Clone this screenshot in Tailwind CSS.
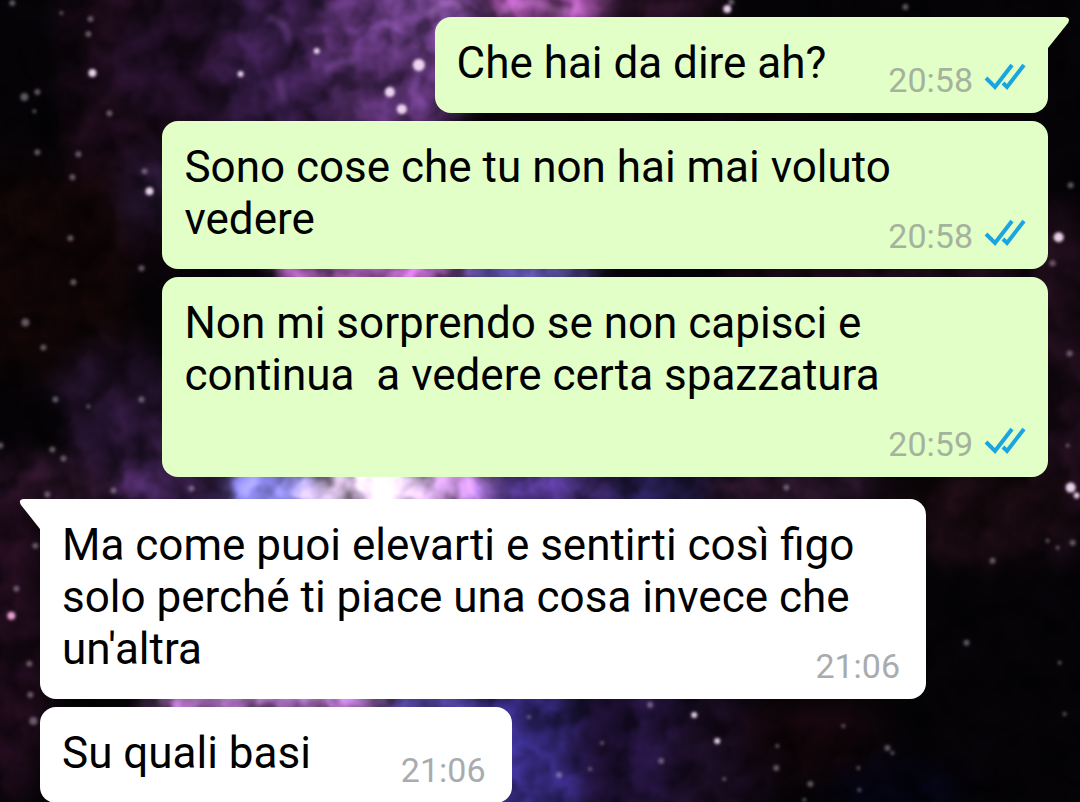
<!DOCTYPE html>
<html lang="it">
<head>
<meta charset="utf-8">
<meta name="viewport" content="width=device-width, initial-scale=1">
<title>Chat</title>
<script src="https://cdn.jsdelivr.net/npm/@tailwindcss/browser@4"></script>
</head>
<body class="relative min-h-screen overflow-x-hidden bg-[#060306] font-[Roboto,sans-serif] text-black">

<!-- Nebula wallpaper -->
<svg class="absolute inset-0 h-full w-full" viewBox="0 0 1080 802" preserveAspectRatio="xMidYMid slice" aria-hidden="true">
  <defs>
    <filter id="cloud" filterUnits="userSpaceOnUse" x="-80" y="-80" width="1240" height="962" color-interpolation-filters="sRGB">
      <feGaussianBlur in="SourceGraphic" stdDeviation="14" result="soft"/>
      <feTurbulence type="fractalNoise" baseFrequency="0.03" numOctaves="4" seed="8" result="noise"/>
      <feColorMatrix in="noise" values="2 0 0 0 -0.5  2 0 0 0 -0.5  2 0 0 0 -0.5  0 0 0 0 1" result="grey"/>
      <feComposite in="soft" in2="grey" operator="arithmetic" k1="0.85" k2="0.5" result="lit"/>
      <feColorMatrix in="lit" values="1 0 0 0 0  0 1 0 0 0  0 0 1 0 0  0 0 0 0 1" result="solid"/>
      <feDisplacementMap in="solid" in2="noise" scale="18" xChannelSelector="R" yChannelSelector="G"/>
      <feGaussianBlur stdDeviation="1.5"/>
    </filter>
    <filter id="wisp" x="-20%" y="-20%" width="140%" height="140%"><feGaussianBlur stdDeviation="3"/></filter>
    <filter id="star" filterUnits="userSpaceOnUse" x="0" y="0" width="1080" height="802"><feGaussianBlur stdDeviation="1.4"/></filter>
  </defs>
  <g filter="url(#cloud)">
    <rect x="-80" y="-80" width="1240" height="962" fill="#050306"/>
    <rect x="70" y="-40" width="120" height="300" fill="#1b0a18"/>
    <rect x="-40" y="170" width="170" height="200" fill="#100506"/>
    <ellipse cx="200" cy="60" rx="90" ry="70" fill="#200e25"/>
    <ellipse cx="280" cy="60" rx="60" ry="100" fill="#341b45"/>
    <ellipse cx="400" cy="40" rx="85" ry="100" fill="#5b3272"/>
    <ellipse cx="430" cy="10" rx="50" ry="45" fill="#7d4a9c"/>
    <ellipse cx="545" cy="0" rx="65" ry="35" fill="#a050a4"/>
    <ellipse cx="670" cy="5" rx="60" ry="25" fill="#251022"/>
    <ellipse cx="150" cy="190" rx="25" ry="40" fill="#2a1838"/>
    <ellipse cx="380" cy="272" rx="110" ry="28" fill="#b567c2"/>
    <ellipse cx="525" cy="272" rx="70" ry="24" fill="#6155b0"/>
    <ellipse cx="900" cy="272" rx="180" ry="20" fill="#1d0c18"/>
    <ellipse cx="120" cy="400" rx="60" ry="60" fill="#1d0f24"/>
    <ellipse cx="140" cy="450" rx="55" ry="50" fill="#2a1636"/>
    <ellipse cx="170" cy="486" rx="70" ry="24" fill="#45265c"/>
    <ellipse cx="40" cy="485" rx="80" ry="26" fill="#2c142a"/>
    <ellipse cx="290" cy="490" rx="64" ry="38" fill="#8a88ea"/>
    <ellipse cx="390" cy="490" rx="90" ry="40" fill="#f4d8ff"/>
    <ellipse cx="465" cy="490" rx="38" ry="32" fill="#d49aec"/>
    <ellipse cx="560" cy="490" rx="80" ry="30" fill="#50358a"/>
    <ellipse cx="660" cy="486" rx="60" ry="25" fill="#2b215a"/>
    <ellipse cx="790" cy="486" rx="90" ry="25" fill="#2c162c"/>
    <ellipse cx="1060" cy="380" rx="50" ry="180" fill="#1a0b16"/>
    <ellipse cx="980" cy="510" rx="90" ry="50" fill="#180a10"/>
    <ellipse cx="15" cy="640" rx="35" ry="160" fill="#1f0b1b"/>
    <ellipse cx="280" cy="703" rx="130" ry="28" fill="#ba7ad0"/>
    <ellipse cx="440" cy="703" rx="60" ry="22" fill="#5447a5"/>
    <ellipse cx="525" cy="760" rx="68" ry="85" fill="#34297c"/>
    <ellipse cx="640" cy="750" rx="70" ry="75" fill="#21123a"/>
    <ellipse cx="720" cy="760" rx="50" ry="70" fill="#180c20"/>
    <ellipse cx="810" cy="735" rx="70" ry="40" fill="#11050a"/>
    <ellipse cx="900" cy="790" rx="70" ry="26" fill="#040414"/>
  </g>
  <g filter="url(#wisp)" fill="none" stroke="#a86bd0" stroke-width="4" stroke-linecap="round" opacity=".55">
    <path d="M268 18Q290 20 288 42M326 72Q334 60 358 60M372 40Q380 12 400 28M418 60Q420 80 412 92L424 108M412 20L430 12M280 80L284 100"/>
    <path d="M432 14Q444 -4 460 6M500 12Q530 -4 548 8Q566 16 580 6" stroke="#e29af0"/>
  </g>
  <g filter="url(#star)" fill="#d8c8dc">
    <g opacity=".9" fill="#ffe6ff">
      <circle cx="93" cy="73" r="4"/><circle cx="317" cy="51" r="3"/><circle cx="419" cy="65" r="6"/><circle cx="390" cy="92" r="5"/><circle cx="402" cy="109" r="5"/><circle cx="241" cy="74" r="3"/><circle cx="150" cy="191" r="4"/><circle cx="727" cy="9" r="4"/><circle cx="1058" cy="237" r="5"/><circle cx="1070" cy="487" r="5"/><circle cx="1076" cy="495" r="3"/><circle cx="12" cy="615" r="4" fill="#ffb0e8"/><circle cx="717" cy="740" r="3"/><circle cx="694" cy="714" r="3"/>
    </g>
    <g opacity=".42">
      <circle cx="25" cy="97" r="4"/><circle cx="38" cy="92" r="3"/><circle cx="35" cy="111" r="2"/><circle cx="13" cy="3" r="3"/><circle cx="62" cy="13" r="2"/><circle cx="91" cy="19" r="3"/><circle cx="89" cy="34" r="3"/><circle cx="110" cy="113" r="3"/><circle cx="38" cy="152" r="3"/><circle cx="79" cy="154" r="3"/><circle cx="73" cy="177" r="3"/><circle cx="71" cy="238" r="3"/><circle cx="145" cy="171" r="3"/><circle cx="142" cy="268" r="3"/><circle cx="74" cy="282" r="3"/><circle cx="26" cy="322" r="4"/><circle cx="44" cy="347" r="3"/><circle cx="56" cy="399" r="3"/><circle cx="142" cy="399" r="3"/><circle cx="89" cy="406" r="2"/><circle cx="53" cy="449" r="3"/><circle cx="64" cy="458" r="3"/><circle cx="1" cy="445" r="3"/><circle cx="114" cy="490" r="3"/><circle cx="192" cy="488" r="3"/><circle cx="48" cy="494" r="3"/><circle cx="36" cy="545" r="3"/><circle cx="17" cy="588" r="3"/><circle cx="30" cy="663" r="3"/><circle cx="31" cy="694" r="3"/><circle cx="34" cy="720" r="4"/><circle cx="731" cy="2" r="3"/><circle cx="905" cy="7" r="3"/><circle cx="786" cy="487" r="3"/><circle cx="992" cy="560" r="3"/><circle cx="966" cy="642" r="3"/><circle cx="1047" cy="540" r="2"/><circle cx="1057" cy="547" r="2"/><circle cx="1072" cy="542" r="3"/><circle cx="1059" cy="662" r="2"/><circle cx="1064" cy="713" r="2"/><circle cx="887" cy="747" r="3"/><circle cx="892" cy="752" r="2"/><circle cx="529" cy="716" r="2"/><circle cx="559" cy="774" r="3"/><circle cx="590" cy="768" r="2"/><circle cx="661" cy="760" r="3"/><circle cx="776" cy="767" r="3"/><circle cx="777" cy="745" r="2"/><circle cx="724" cy="778" r="2"/><circle cx="810" cy="783" r="3"/><circle cx="858" cy="767" r="2"/><circle cx="859" cy="789" r="2"/><circle cx="843" cy="725" r="2"/><circle cx="650" cy="704" r="3"/><circle cx="1070" cy="185" r="3"/><circle cx="1052" cy="263" r="3"/><circle cx="1069" cy="353" r="3"/><circle cx="1067" cy="445" r="2"/><circle cx="602" cy="742" r="2"/><circle cx="804" cy="799" r="2"/>
    </g>
  </g>
</svg>

<svg class="hidden" aria-hidden="true">
  <symbol id="ticks" viewBox="0 0 42 30"><path d="M2 16L11 25L28 3M19 21L23 25L40 3" fill="none" stroke="#1ba5df" stroke-width="4"/></symbol>
</svg>

<main class="relative flex flex-col pt-[17px] text-[44px] leading-[52px]">
  <section class="flex flex-col items-end gap-2 pr-8">
    <article class="relative flex items-end gap-[62px] rounded-2xl rounded-tr-none bg-[#e1ffc7] pt-5 pr-[22px] pb-6 pl-[22px]">
      <svg class="absolute top-0 left-full -ml-px h-8 w-[22px]" viewBox="0 0 22 32" aria-hidden="true"><path d="M0 0H18Q24 1 21 6L1 31H0Z" fill="#e1ffc7"/></svg>
      <p>Che hai da dire ah?</p>
      <span class="-mb-[11px] flex items-center gap-[11px] text-[34px] leading-10 text-[#a5b29c]"><time>20:58</time><svg class="-mt-1.5 h-[30px] w-[42px]" role="img" aria-label="Letto"><use href="#ticks"/></svg></span>
    </article>
    <article class="flow-root w-[84.5%] rounded-2xl bg-[#e1ffc7] pt-5 pr-[22px] pb-[13px] pl-[22px]">
      Sono cose che tu non hai mai voluto vedere
      <span class="float-right mt-[23px] flex items-center gap-[11px] text-[34px] leading-10 text-[#a5b29c]"><time>20:58</time><svg class="-mt-1.5 h-[30px] w-[42px]" role="img" aria-label="Letto"><use href="#ticks"/></svg></span>
    </article>
    <article class="w-[84.5%] rounded-2xl bg-[#e1ffc7] pt-5 pr-[22px] pb-[13px] pl-[22px]">
      <p>Non mi sorprendo se non capisci e continua &nbsp;a vedere certa spazzatura</p>
      <span class="mt-[23px] flex items-center justify-end gap-[11px] text-[34px] leading-10 text-[#a5b29c]"><time>20:59</time><svg class="-mt-1.5 h-[30px] w-[42px]" role="img" aria-label="Letto"><use href="#ticks"/></svg></span>
    </article>
  </section>
  <section class="mt-[22px] flex flex-col items-start gap-2 pl-10">
    <article class="relative flow-root w-[85.2%] rounded-2xl rounded-tl-none bg-white pt-5 pr-[26px] pb-[13px] pl-[22px]">
      <svg class="absolute top-0 right-full -mr-px h-8 w-[22px]" viewBox="0 0 22 32" aria-hidden="true"><path d="M22 0H4Q-1 1 2 6L21 30H22Z" fill="#fff"/></svg>
      Ma come puoi elevarti e sentirti così figo solo perché ti piace una cosa invece che un'altra
      <time class="float-right mt-[23px] text-[34px] leading-10 text-[#a8acaf]">21:06</time>
    </article>
    <article class="flex items-end gap-[90px] rounded-2xl bg-white pt-5 pr-[26px] pb-6 pl-[22px]">
      <p>Su quali basi</p>
      <time class="-mb-[11px] text-[34px] leading-10 text-[#a8acaf]">21:06</time>
    </article>
  </section>
</main>
</body>
</html>
